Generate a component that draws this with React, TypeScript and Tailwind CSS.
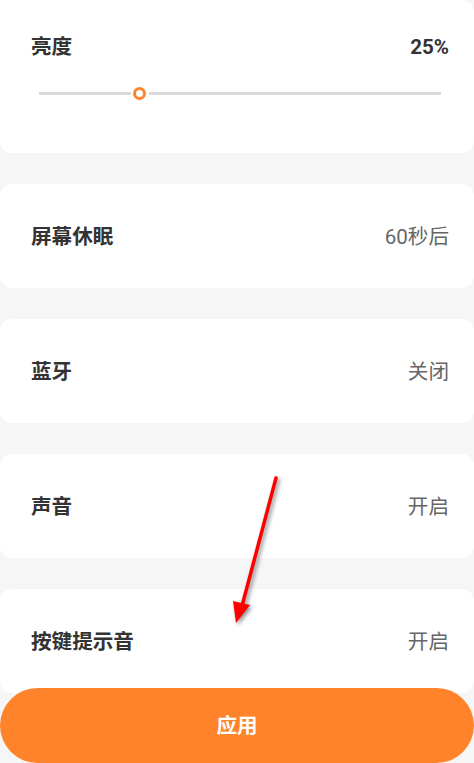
import React from 'react';

type Row = { label: string; value: string };

const rows: Row[] = [
  { label: '屏幕休眠', value: '60秒后' },
  { label: '蓝牙', value: '关闭' },
  { label: '声音', value: '开启' },
  { label: '按键提示音', value: '开启' },
];

const font = { fontFamily: "Roboto, 'Noto Sans CJK SC', sans-serif" };

function BrightnessCard({ value }: { value: number }) {
  return (
    <div className="h-[153px] bg-white rounded-b-xl rounded-tr-xl pl-[31px] pr-[25px] pt-[31px]">
      <div className="flex items-center justify-between h-[32px]">
        <span className="text-[20.6px] font-bold text-[#333]">亮度</span>
        <span className="text-[20.6px] font-bold text-[#333]">{value}%</span>
      </div>
      {/* slider track with the thumb cut out of it */}
      <div className="relative mt-[29px] ml-[8px] mr-[8px] h-[3px] bg-[#dadada]">
        <div
          className="absolute top-1/2 -translate-y-1/2 -translate-x-1/2 w-[18px] h-[18px] rounded-full bg-white flex items-center justify-center"
          style={{ left: `${value}%` }}
        >
          <div className="w-[13px] h-[13px] rounded-full border-[3px] border-[#ff832b] bg-white" />
        </div>
      </div>
    </div>
  );
}

function SettingRow({ label, value }: Row) {
  return (
    <div className="h-[104px] bg-white rounded-xl pl-[31px] pr-[25px] pt-[3px] flex items-center justify-between">
      <span className="text-[20.6px] font-bold text-[#333]">{label}</span>
      <span className="text-[20.6px] text-[#666]">{value}</span>
    </div>
  );
}

export default function App() {
  return (
    <div className="relative min-h-[763px] bg-[#f6f6f6] overflow-hidden" style={font}>
      <div className="flex flex-col gap-[31px]">
        <BrightnessCard value={25} />
        {rows.map(r => (
          <SettingRow key={r.label} {...r} />
        ))}
      </div>

      {/* annotation arrow */}
      <svg
        className="absolute left-0 top-0 pointer-events-none drop-shadow-[2px_2px_2px_rgba(0,0,0,0.45)]"
        width="474"
        height="763"
      >
        <line x1="276" y1="478" x2="242" y2="606" stroke="#ff0000" strokeWidth="3.5" strokeLinecap="round" />
        <polygon points="233,601 250,605 236,623" fill="#ff0000" />
      </svg>

      <button className="absolute left-0 right-0 top-[688px] h-[75px] pt-[2px] rounded-full bg-[#ff832b] text-white text-[20.6px] font-bold">
        应用
      </button>
    </div>
  );
}
